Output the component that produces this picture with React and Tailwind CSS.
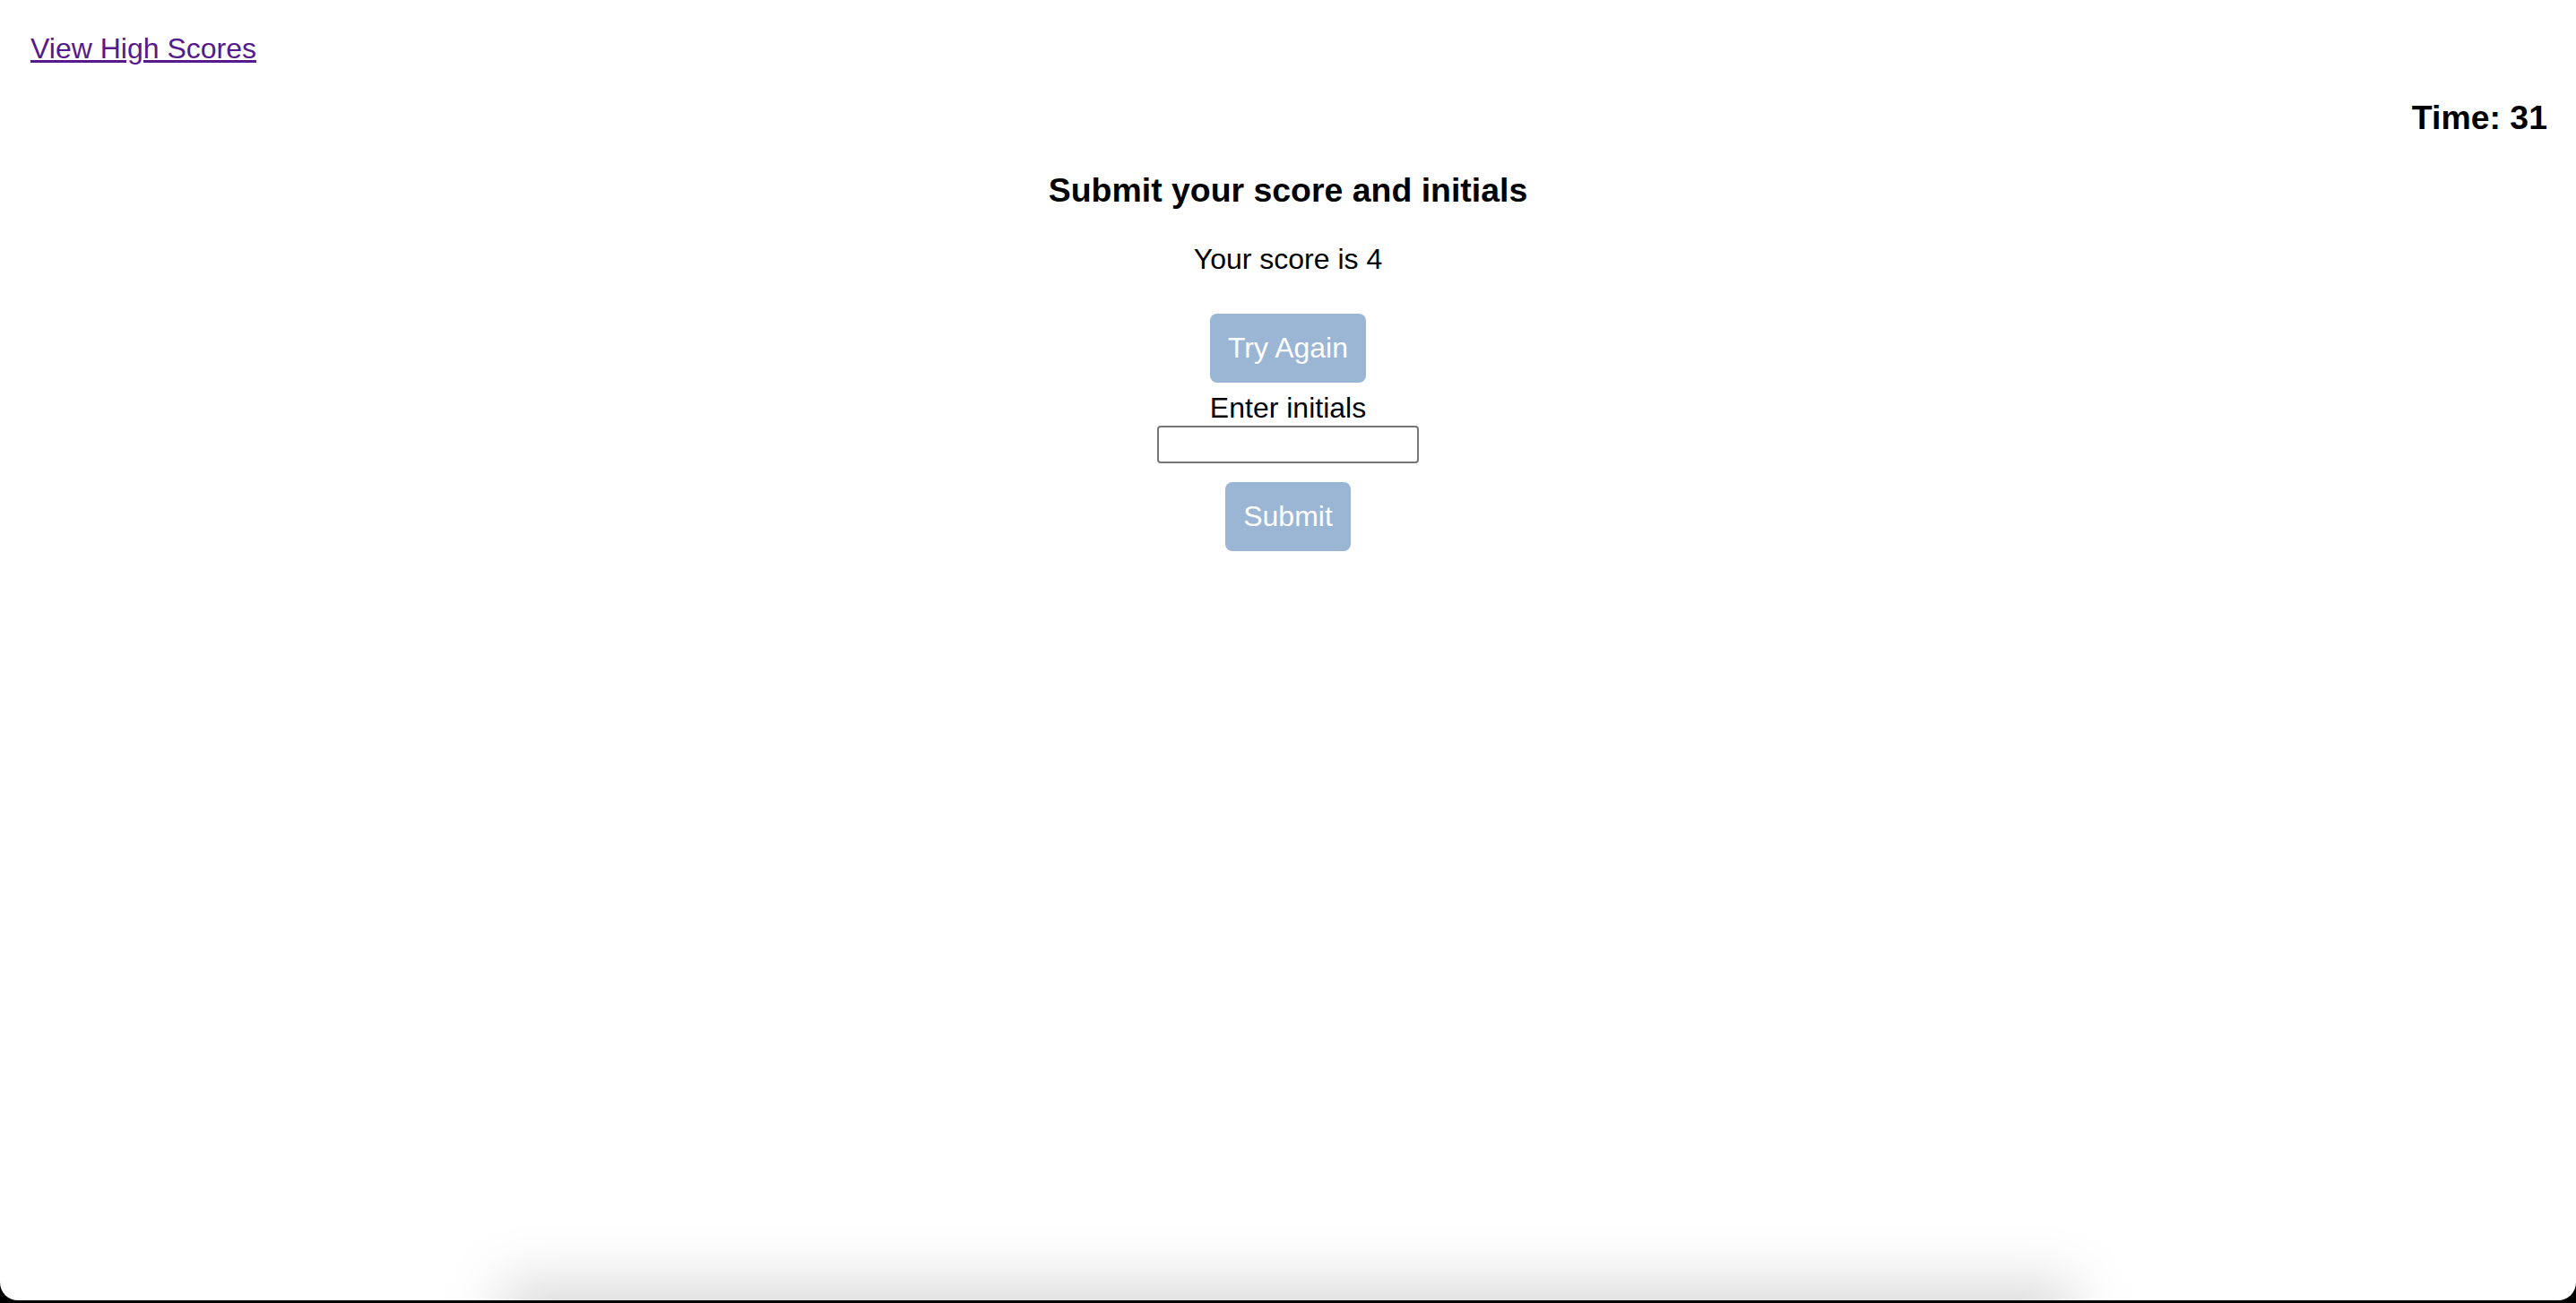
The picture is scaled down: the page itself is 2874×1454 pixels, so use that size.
export default function App() {
  return (
    <div className="relative h-[1454px] overflow-hidden bg-black">
      <div className="relative h-[1451px] overflow-hidden rounded-b-[20px] bg-white font-['Liberation_Sans',Arial,sans-serif] text-black">
        <div className="pl-[34px] pt-[36px]">
          <a href="#" className="text-[32px] leading-[37px] text-[#551a8b] underline">
            View High Scores
          </a>
        </div>

        <div className="mt-[37px] flex justify-end pr-[32px]">
          <h3 className="text-[37.44px] font-bold leading-[43px]">Time: 31</h3>
        </div>

        <div className="flex flex-col items-center">
          <h3 className="mt-[38px] text-[37.44px] font-bold leading-[43px]">
            Submit your score and initials
          </h3>
          <p className="mt-[37px] text-[32px] leading-[37px]">Your score is 4</p>
          <button className="mt-[42px] h-[77px] rounded-[8px] bg-[#9bb5d5] px-[20px] text-[32px] leading-[37px] text-white">
            Try Again
          </button>
          <label className="mt-[10px] text-[32px] leading-[37px]">Enter initials</label>
          <input
            type="text"
            className="mt-[1px] h-[42px] w-[292px] rounded-[4px] border-2 border-[#767676] bg-white px-2 text-[26px]"
          />
          <button className="mt-[21px] h-[77px] rounded-[8px] bg-[#9bb5d5] px-[20px] text-[32px] leading-[37px] text-white">
            Submit
          </button>
        </div>

        {/* window shadow along the bottom edge */}
        <div className="pointer-events-none absolute bottom-[-100px] left-[560px] right-[560px] h-[120px] bg-black/15 blur-[32px]" />
      </div>
    </div>
  )
}
